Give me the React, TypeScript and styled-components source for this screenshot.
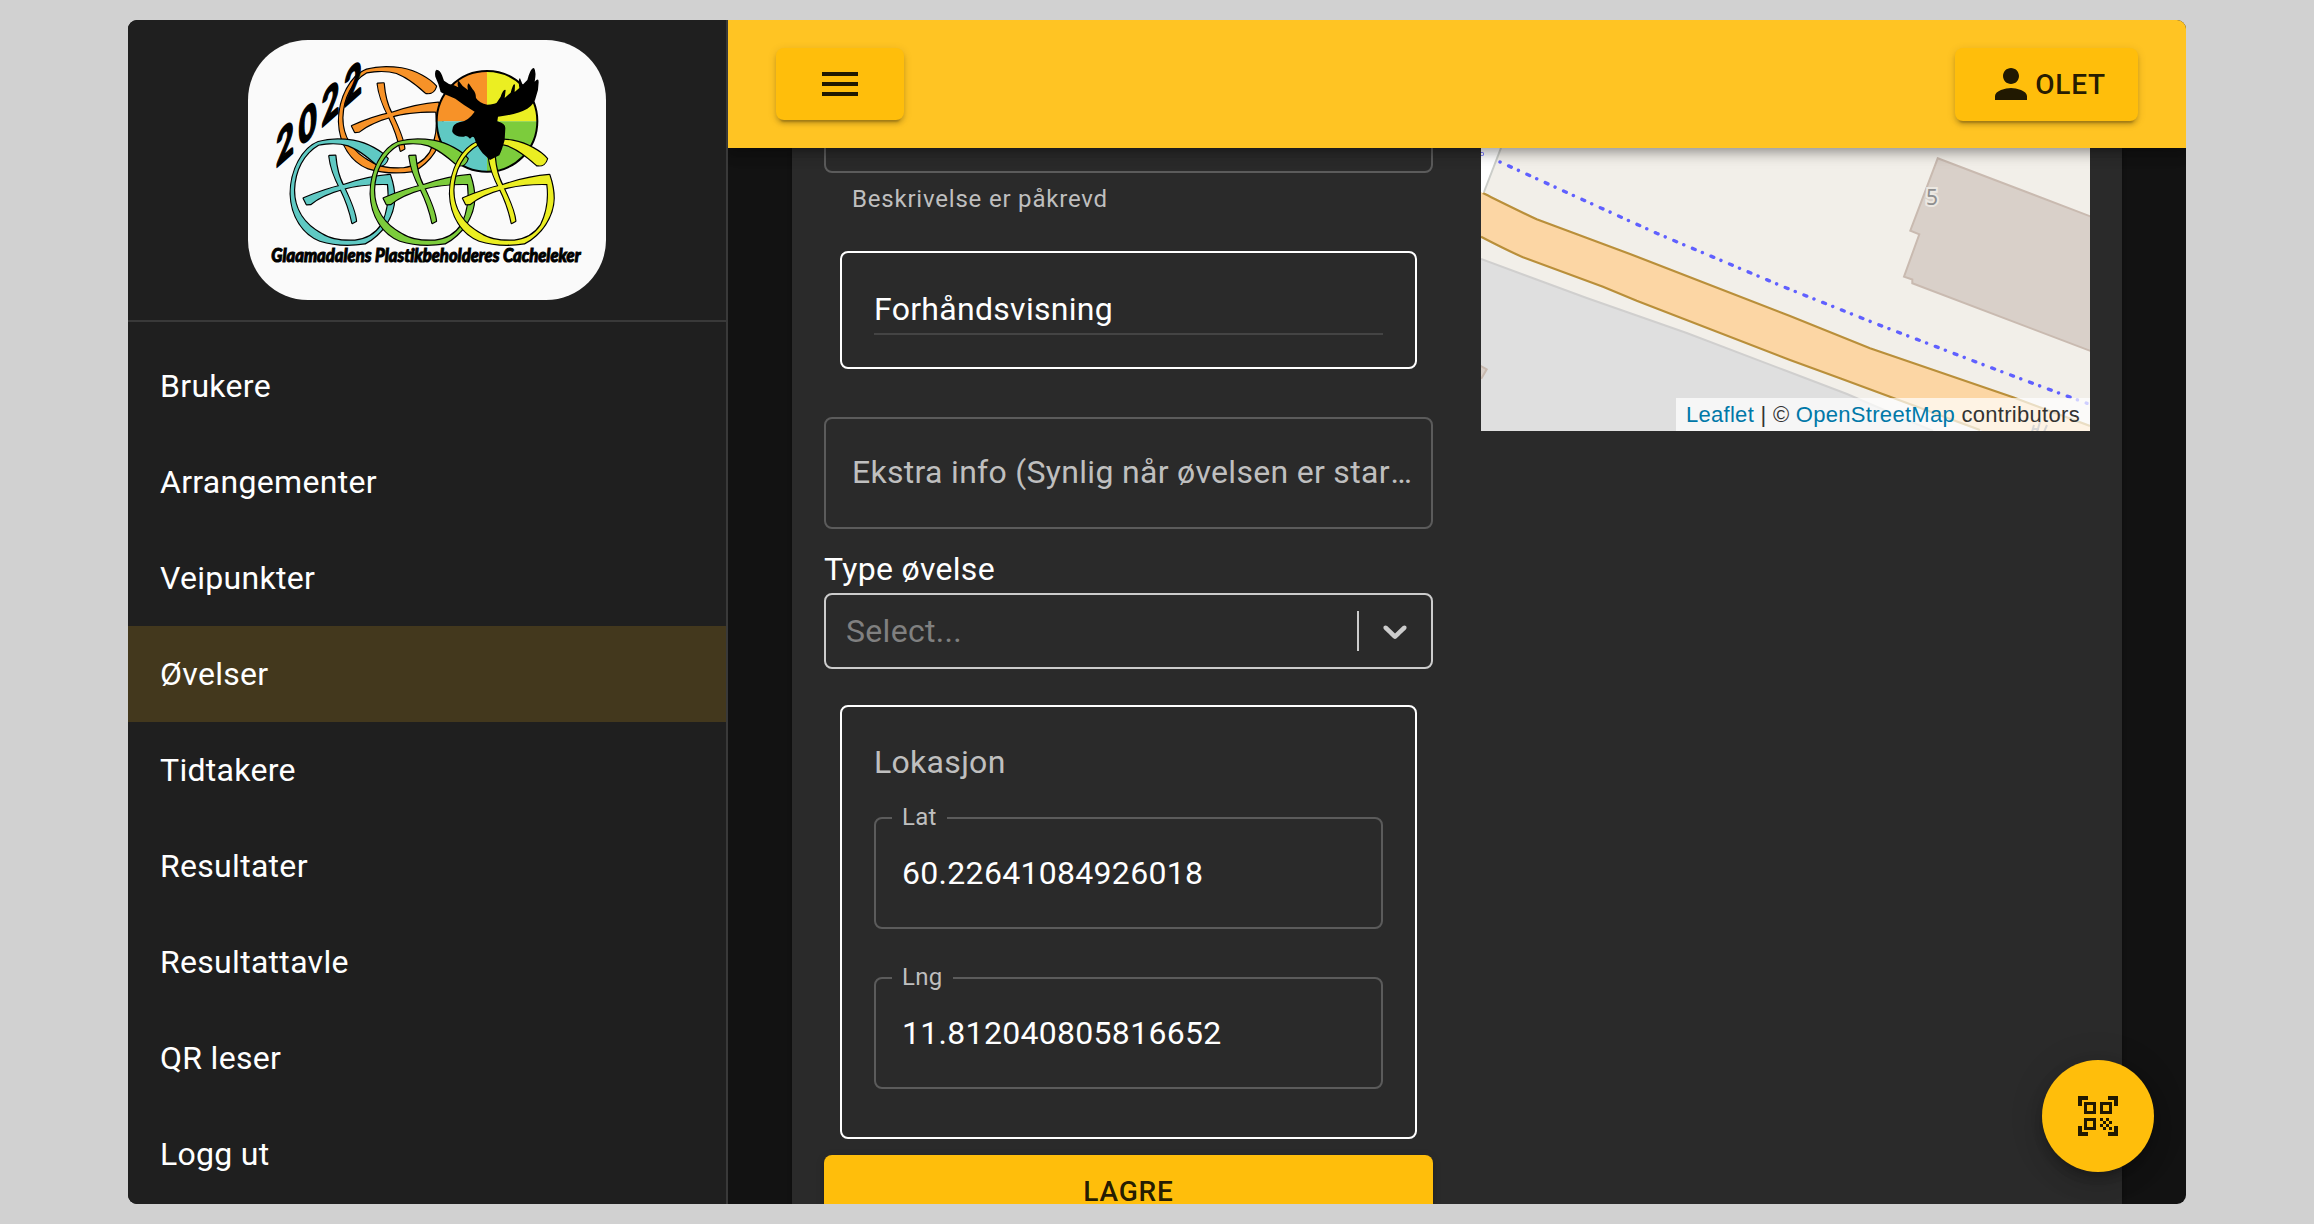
import React from "react";
import styled, { createGlobalStyle } from "styled-components";
import { MdMenu, MdPerson, MdQrCodeScanner } from "react-icons/md";

const colors = {
  primary: "#ffbe0b",
  bar: "#ffc423",
  onPrimary: "rgba(0, 0, 0, 0.87)",
  drawer: "#1f1f1f",
  page: "#121212",
  card: "#2a2a2a",
  outline: "#5b5b5b",
  muted: "#bfbfbf",
};

const GlobalStyle = createGlobalStyle`
  *, *::before, *::after { box-sizing: border-box; }
  body {
    margin: 0;
    background: #d1d1d1;
    font-family: Roboto, "Liberation Sans", sans-serif;
    font-size: 32px;
    line-height: 48px;
    letter-spacing: 0.00938em;
    color: #fff;
  }
`;

const Stage = styled.div`
  height: 1224px;
  padding: 20px 128px;
  overflow: hidden;
`;

const Window = styled.div`
  display: flex;
  width: 2058px;
  height: 1184px;
  border-radius: 9px;
  overflow: hidden;
  background: ${colors.page};
  position: relative;
`;

const Drawer = styled.aside`
  position: relative;
  z-index: 2;
  width: 600px;
  flex: none;
  background: ${colors.drawer};
  border-right: 2px solid #393939;
`;

const Brand = styled.div`
  display: flex;
  justify-content: center;
  padding: 20px 0;
  border-bottom: 2px solid #393939;
`;

const LogoPlate = styled.div`
  width: 358px;
  height: 260px;
  border-radius: 60px;
  background: #fafafa;

  svg {
    display: block;
    overflow: visible;
  }
`;

const Menu = styled.nav`
  display: flex;
  flex-direction: column;
  padding-top: 16px;
`;

const MenuItem = styled.a<{ $selected?: boolean }>`
  display: flex;
  align-items: center;
  height: 96px;
  padding: 0 32px;
  background: ${(p) => (p.$selected ? "#43381d" : "transparent")};
`;

const Main = styled.main`
  flex: 1;
  min-width: 0;
  display: flex;
  flex-direction: column;
`;

const AppBar = styled.header`
  position: relative;
  z-index: 1;
  flex: none;
  display: flex;
  align-items: center;
  justify-content: space-between;
  height: 128px;
  padding: 0 48px;
  background: ${colors.bar};
  box-shadow: 0 4px 8px -2px rgba(0, 0, 0, 0.2), 0 8px 10px rgba(0, 0, 0, 0.14),
    0 2px 20px rgba(0, 0, 0, 0.12);
`;

const Button = styled.button<{ $full?: boolean }>`
  display: flex;
  align-items: center;
  justify-content: center;
  flex: none;
  min-width: 128px;
  width: ${(p) => (p.$full ? "100%" : "auto")};
  padding: 12px 32px;
  border: 0;
  border-radius: 8px;
  background: ${colors.primary};
  color: ${colors.onPrimary};
  font: 500 28px/49px Roboto, "Liberation Sans", sans-serif;
  letter-spacing: 0.02857em;
  text-transform: uppercase;
  box-shadow: 0 6px 2px -4px rgba(0, 0, 0, 0.2), 0 4px 4px rgba(0, 0, 0, 0.14),
    0 2px 10px rgba(0, 0, 0, 0.12);

  svg {
    display: block;
  }
`;

const Content = styled.div`
  flex: 1;
  min-height: 0;
  overflow: hidden;
  padding: 0 64px;
`;

const Card = styled.section`
  display: grid;
  grid-template-columns: repeat(2, minmax(0, 1fr));
  gap: 48px;
  align-items: start;
  height: 1056px;
  padding: 0 32px;
  background: ${colors.card};
  box-shadow: 0 0 4px rgba(0, 0, 0, 0.4);
`;

const Form = styled.form`
  display: flex;
  flex-direction: column;
  min-width: 0;
`;

const Outlined = styled.div<{ $scrolled?: boolean }>`
  height: 112px;
  margin-top: ${(p) => (p.$scrolled ? "-87px" : "48px")};
  padding-left: 26px;
  border: 2px solid ${colors.outline};
  border-radius: 8px;
`;

const Placeholder = styled.span`
  display: block;
  width: 561px;
  line-height: 106px;
  color: ${colors.muted};
  white-space: nowrap;
  overflow: hidden;
  text-overflow: ellipsis;
`;

const HelperText = styled.p`
  margin: 6px 28px 32px;
  font-size: 24px;
  line-height: 40px;
  letter-spacing: 0.03333em;
  color: ${colors.muted};
`;

const Panel = styled.div<{ $tall?: boolean }>`
  margin: ${(p) => (p.$tall ? "36px 16px 16px" : "0 16px")};
  height: ${(p) => (p.$tall ? "434px" : "118px")};
  padding: 32px;
  border: 2px solid #fff;
  border-radius: 8px;
`;

const PreviewTitle = styled.div`
  height: 50px;
  border-bottom: 2px solid #444;
`;

const PanelTitle = styled.div`
  height: 48px;
  line-height: 46px;
  color: ${colors.muted};
`;

const FieldLabel = styled.label`
  margin-top: 16px;
  letter-spacing: 0.00938em;
`;

const Select = styled.div`
  display: flex;
  align-items: center;
  height: 76px;
  padding-right: 16px;
  border: 2px solid #ccc;
  border-radius: 8px;
`;

const SelectValue = styled.span`
  flex: 1;
  padding-left: 20px;
  color: #808080;
`;

const Separator = styled.span`
  width: 2px;
  height: 40px;
  margin-right: 16px;
  background: #ccc;
`;

const Fieldset = styled.fieldset<{ $first?: boolean }>`
  height: 123px;
  margin: ${(p) => (p.$first ? "19px" : "37px")} 0 0;
  padding: 0 16px;
  border: 2px solid ${colors.outline};
  border-radius: 8px;
`;

const Legend = styled.legend`
  height: 24px;
  padding: 0 10px;
  font-size: 24px;
  line-height: 22px;
  color: ${colors.muted};
`;

const FieldValue = styled.div`
  padding-left: 10px;
  line-height: 86px;
`;

const MapView = styled.div`
  position: relative;
  height: 283px;
  background: #f2efe9;

  svg {
    display: block;
  }
`;

const Attribution = styled.div`
  position: absolute;
  right: 0;
  bottom: 0;
  padding: 0 10px;
  background: rgba(255, 255, 255, 0.7);
  color: #333;
  font: 22px/33px "Liberation Sans", Arial, sans-serif;
  letter-spacing: 0.3px;
  white-space: nowrap;

  a {
    color: #0078a8;
  }
`;

const Fab = styled.button`
  position: absolute;
  right: 32px;
  bottom: 32px;
  display: grid;
  place-items: center;
  width: 112px;
  height: 112px;
  padding: 0;
  border: 0;
  border-radius: 50%;
  background: ${colors.primary};
  color: ${colors.onPrimary};
  box-shadow: 0 6px 10px -2px rgba(0, 0, 0, 0.2), 0 12px 20px rgba(0, 0, 0, 0.14),
    0 2px 36px rgba(0, 0, 0, 0.12);
`;

const ringPath =
  "M443 386C425 365 385 340 340 332C300 326 262 328 235 336C188 354 152 420 152 492C154 560 190 612 240 632C280 645 330 647 375 640C425 615 462 560 463 505C463 478 456 452 450 435C405 438 355 450 308 466C270 474 230 488 191 505L200 523L212 522C240 500 270 488 308 477C350 465 400 461 444 462C449 500 445 545 425 585C405 615 380 628 345 632C300 634 270 628 245 612C195 585 162 540 162 480C164 420 190 370 235 344C265 338 300 338 325 346C365 362 395 390 413 406C430 408 438 403 443 386Z";
const stemPath =
  "M268 378L286 377C289 415 298 445 309 466C325 500 345 540 348 573L337 579C330 545 318 510 302 478C285 445 272 415 268 378Z";

function Tag({ x, y, fill }: { x: number; y: number; fill: string }) {
  return (
    <g transform={`translate(${x} ${y})`}>
      <g fill="#000" stroke="#000" strokeWidth="7" strokeLinejoin="round">
        <path d={ringPath} />
        <path d={stemPath} />
      </g>
      <path d={ringPath} fill={fill} />
      <path d={stemPath} fill={fill} />
    </g>
  );
}

function Logo() {
  return (
    <svg width="358" height="260" viewBox="24 30 1074 780">
      <Tag x={145} y={-217} fill="#f79228" />
      <path d="M741 274V123A151 151 0 0 0 590 274Z" fill="#f79228" />
      <path d="M741 274V123A151 151 0 0 1 892 274Z" fill="#ebee22" />
      <path d="M741 274H590A151 151 0 0 0 741 425Z" fill="#5fc9c3" />
      <path d="M741 274H892A151 151 0 0 1 741 425Z" fill="#7ccc3c" />
      <circle cx="741" cy="274" r="151" fill="none" stroke="#000" strokeWidth="6" />
      <Tag x={0} y={0} fill="#5fc9c3" />
      <Tag x={240} y={0} fill="#7ccc3c" />
      <Tag x={478} y={0} fill="#ebee22" />
      <path
        d="M590 119Q600 120 606 136L612 152Q626 164 642 166L655 172Q650 158 656 152L668 168L684 180Q680 164 686 160L698 178Q708 188 708 204Q718 220 742 224Q762 222 770 218L782 200Q790 176 797 180L794 204L812 188Q820 156 825 164L824 186L838 174Q834 146 840 145L848 164L862 150Q872 112 882 114Q890 124 884 155Q896 142 896 156Q896 180 888 200Q884 222 862 236Q830 254 774 260L772 274Q796 280 796 294L794 330Q786 360 778 376L750 390L728 370Q708 344 704 326Q700 314 690 326Q680 314 672 320Q646 322 637 306Q634 282 660 276Q684 274 704 245Q672 226 646 206Q612 192 602 186Q596 160 586 140Q583 122 590 119Z"
        fill="#000"
      />
      <text
        transform="translate(108 414) skewY(-41.5) scale(0.66 1)"
        fontFamily="Lato"
        fontWeight="900"
        fontSize="140"
        letterSpacing="22"
        stroke="#000"
        strokeWidth="6"
        strokeLinejoin="round"
      >
        2022
      </text>
      <text
        x="94"
        y="695"
        fontFamily="Lato"
        fontWeight="900"
        fontStyle="italic"
        fontSize="54"
        textLength="928"
        lengthAdjust="spacingAndGlyphs"
        letterSpacing="0"
        stroke="#000"
        strokeWidth="3"
      >
        Glaamadalens Plastikbeholderes Cacheleker
      </text>
    </svg>
  );
}

const roadTop = "L2.3 45.3C20 54 38 63 55.7 71.3L149 106L229 137L309 168L389 200.3L532 249.3L609 278";

function StreetMap() {
  return (
    <svg width="609" height="283" viewBox="0 0 609 283">
      <path d="M0 0H19.7L2.3 46H0Z" fill="#fff" />
      <path d="M20 0L3 44" stroke="#cbcdc9" strokeWidth="2" />
      <path d="M0 111L105.7 150L205.7 185L303 222L366 246L452 283H0Z" fill="#dfdfdf" />
      <path d="M0 111L105.7 150L205.7 185L303 222L366 246L452 283" fill="none" stroke="#d0cfce" strokeWidth="2" />
      <path
        d="M456.7 10.3L611 69V203.5L431.3 135.3V131.5L423 128.7L438.3 86.3L429.3 82.7Z"
        fill="#d9d0c9"
        stroke="#c9bab0"
        strokeWidth="2"
      />
      <path d="M-2 217L5.7 221.3L0.7 230L-2 231" fill="#d9d0c9" stroke="#c9bab0" strokeWidth="2" />
      <path
        d={`M0 44${roadTop}V325L499 282L409 248.7L359 230.3L309 212L155.7 152.7L122 138.7L42 109.3L0 88.7Z`}
        fill="#fcd6a4"
      />
      <g fill="none" stroke="#b98f3a" strokeWidth="2.2">
        <path d={`M2 45${roadTop}`} />
        <path d="M0 88.7C14 96 28 103 42 109.3L122 138.7L155.7 152.7L309 212L359 230.3L409 248.7L499 282" />
      </g>
      <g fill="none" stroke="#6060ff" strokeWidth="3.4" strokeLinecap="round">
        <circle cx="1" cy="6" r="0.4" />
        <path
          d="M19 14L102.3 52L175.7 85.3L303 139L395.7 176L509 219.3L585.7 248L606 255.3"
          strokeDasharray="0.1 9.3 3 7.75"
        />
      </g>
      <path d="M553 277L551 284M559 274L556 284M551 281H558M566 277L563 284" stroke="#777" strokeWidth="2" />
      <text
        x="445"
        y="57"
        fontFamily="Noto Sans"
        fontSize="21"
        letterSpacing="0"
        fill="#8f8f8f"
        stroke="#ece8e2"
        strokeWidth="4"
        paintOrder="stroke"
      >
        5
      </text>
    </svg>
  );
}

function Chevron() {
  return (
    <svg width="40" height="40" viewBox="0 0 20 20" fill="#ccc">
      <path d="M4.516 7.548c0.436-0.446 1.043-0.481 1.576 0l3.908 3.747 3.908-3.747c0.533-0.481 1.141-0.446 1.574 0 0.436 0.445 0.408 1.197 0 1.615-0.406 0.418-4.695 4.502-4.695 4.502-0.217 0.223-0.502 0.335-0.787 0.335s-0.57-0.112-0.789-0.335c0 0-4.287-4.084-4.695-4.502s-0.436-1.17 0-1.615z" />
    </svg>
  );
}

const menu = [
  "Brukere",
  "Arrangementer",
  "Veipunkter",
  "Øvelser",
  "Tidtakere",
  "Resultater",
  "Resultattavle",
  "QR leser",
  "Logg ut",
];

export default function App() {
  return (
    <Stage>
      <GlobalStyle />
      <Window>
        <Drawer>
          <Brand>
            <LogoPlate>
              <Logo />
            </LogoPlate>
          </Brand>
          <Menu>
            {menu.map((item) => (
              <MenuItem key={item} $selected={item === "Øvelser"}>
                {item}
              </MenuItem>
            ))}
          </Menu>
        </Drawer>
        <Main>
          <AppBar>
            <Button>
              <MdMenu size={48} />
            </Button>
            <Button>
              <MdPerson size={48} />
              Olet
            </Button>
          </AppBar>
          <Content>
            <Card>
              <Form>
                <Outlined $scrolled />
                <HelperText>Beskrivelse er påkrevd</HelperText>
                <Panel>
                  <PreviewTitle>Forhåndsvisning</PreviewTitle>
                </Panel>
                <Outlined>
                  <Placeholder>Ekstra info (Synlig når øvelsen er startet)</Placeholder>
                </Outlined>
                <FieldLabel>Type øvelse</FieldLabel>
                <Select>
                  <SelectValue>Select...</SelectValue>
                  <Separator />
                  <Chevron />
                </Select>
                <Panel $tall>
                  <PanelTitle>Lokasjon</PanelTitle>
                  <Fieldset $first>
                    <Legend>Lat</Legend>
                    <FieldValue>60.22641084926018</FieldValue>
                  </Fieldset>
                  <Fieldset>
                    <Legend>Lng</Legend>
                    <FieldValue>11.812040805816652</FieldValue>
                  </Fieldset>
                </Panel>
                <Button type="button" $full>
                  Lagre
                </Button>
              </Form>
              <MapView>
                <StreetMap />
                <Attribution>
                  <a>Leaflet</a> | © <a>OpenStreetMap</a> contributors
                </Attribution>
              </MapView>
            </Card>
          </Content>
        </Main>
        <Fab>
          <MdQrCodeScanner size={48} />
        </Fab>
      </Window>
    </Stage>
  );
}
